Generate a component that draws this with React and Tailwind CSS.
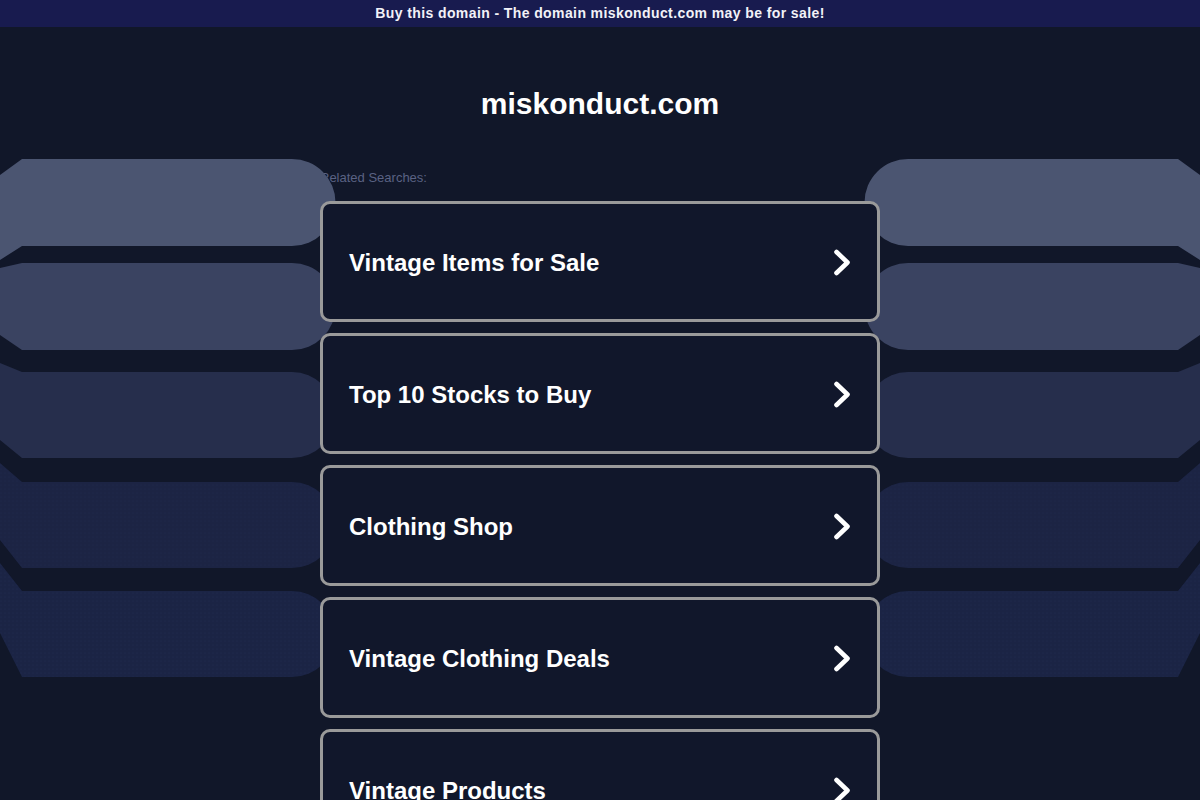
import React from 'react';

const searches = [
    'Vintage Items for Sale',
    'Top 10 Stocks to Buy',
    'Clothing Shop',
    'Vintage Clothing Deals',
    'Vintage Products',
];

// Rounded bars that fan out from the page edges; the right side is the mirror image.
function SideShapes({ mirrored }) {
    const dots = mirrored ? 'dotsR' : 'dotsL';
    return (
        <svg
            width="340"
            height="800"
            viewBox="0 0 340 800"
            className={mirrored ? 'absolute top-0 right-0' : 'absolute top-0 left-0'}
        >
            <defs>
                <pattern id={dots} width="4" height="4" patternUnits="userSpaceOnUse">
                    <circle cx="1" cy="1" r="0.5" fill="#2c3760" />
                    <circle cx="3" cy="3" r="0.4" fill="#141b36" />
                </pattern>
            </defs>
            <g transform={mirrored ? 'translate(340,0) scale(-1,1)' : undefined}>
                <path d="M0 175 L22 159 H292 A43.5 43.5 0 0 1 292 246 H22 L0 260 Z" fill="#4b5571" />
                <path d="M0 268 L22 263 H292 A43.5 43.5 0 0 1 292 350 H22 L0 335 Z" fill="#3a4361" />
                <path d="M0 363 L22 372 H292 A43 43 0 0 1 292 458 H22 L0 440 Z" fill="#262e4c" />
                <path d="M0 463 L22 482 H292 A43 43 0 0 1 292 568 H22 L0 540 Z" fill="#1c2444" />
                <path d="M0 463 L22 482 H292 A43 43 0 0 1 292 568 H22 L0 540 Z" fill={`url(#${dots})`} opacity="0.35" />
                <path d="M0 563 L22 591 H292 A43 43 0 0 1 292 677 H22 L0 633 Z" fill="#1b2445" />
                <path d="M0 563 L22 591 H292 A43 43 0 0 1 292 677 H22 L0 633 Z" fill={`url(#${dots})`} opacity="0.45" />
            </g>
        </svg>
    );
}

function Chevron() {
    return (
        <svg width="18" height="27" viewBox="0 0 18 27" className="shrink-0">
            <polyline points="3.5,3 14.5,13.5 3.5,24" fill="none" stroke="#ffffff" strokeWidth="4.6" strokeLinecap="round" strokeLinejoin="round" />
        </svg>
    );
}

export default function App() {
    return (
        <div className="relative h-[800px] overflow-hidden bg-[#111729] font-['Liberation_Sans',Arial,sans-serif]">
            <div className="h-[27px] bg-[#181b4f] flex items-center justify-center">
                <p className="text-[14px] font-bold text-[#f2f2f8] tracking-[0.4px]">
                    Buy this domain - The domain miskonduct.com may be for sale!
                </p>
            </div>

            <h1 className="mt-[59px] text-center text-[30px] leading-[36px] font-bold text-white">miskonduct.com</h1>

            <div className="w-[560px] mx-auto">
                <p className="mt-[48px] text-[13px] leading-[16px] text-[#5a6283]">Related Searches:</p>

                <div className="relative z-10 mt-[15px] flex flex-col gap-[11px]">
                    {searches.map((s) => (
                        <div
                            key={s}
                            className="h-[121px] shrink-0 flex items-center justify-between rounded-[10px] border-[3px] border-[#9a9a9a] bg-[#11172b] pl-[26px] pr-[26px] pt-[2px]"
                        >
                            <span className="text-[24px] font-bold text-white">{s}</span>
                            <Chevron />
                        </div>
                    ))}
                </div>
            </div>

            <SideShapes />
            <SideShapes mirrored />
        </div>
    );
}
